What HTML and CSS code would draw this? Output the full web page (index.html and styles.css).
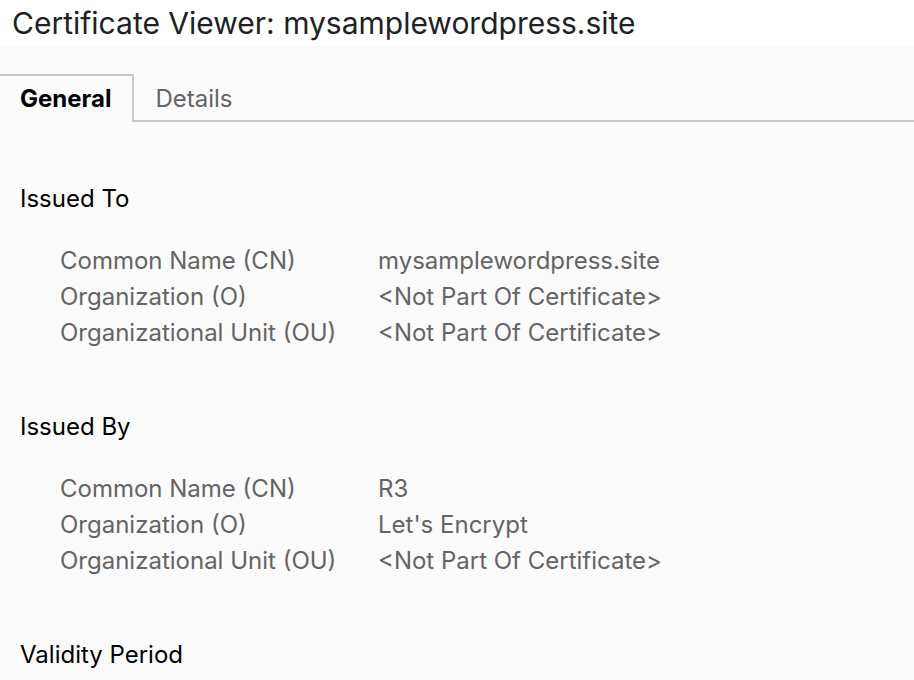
FILE: index.html
```html
<!DOCTYPE html>
<html lang="en">
<head>
<meta charset="utf-8">
<title>Certificate Viewer: mysamplewordpress.site</title>
<link rel="stylesheet" href="styles.css">
</head>
<body>
<header class="titlebar"><h1 class="title">Certificate Viewer: mysamplewordpress.site</h1></header>
<div class="tabs" role="tablist">
  <button class="tab tab-active" type="button" role="tab" id="general-tab" aria-selected="true" aria-controls="general">General</button>
  <button class="tab" type="button" role="tab" aria-selected="false">Details</button>
</div>
<main class="panel" id="general" role="tabpanel" aria-labelledby="general-tab">
  <section class="group">
    <h2 class="heading">Issued To</h2>
    <dl class="fields">
      <dt>Common Name (CN)</dt><dd>mysamplewordpress.site</dd>
      <dt>Organization (O)</dt><dd>&lt;Not Part Of Certificate&gt;</dd>
      <dt>Organizational Unit (OU)</dt><dd>&lt;Not Part Of Certificate&gt;</dd>
    </dl>
  </section>
  <section class="group">
    <h2 class="heading">Issued By</h2>
    <dl class="fields">
      <dt>Common Name (CN)</dt><dd>R3</dd>
      <dt>Organization (O)</dt><dd>Let's Encrypt</dd>
      <dt>Organizational Unit (OU)</dt><dd>&lt;Not Part Of Certificate&gt;</dd>
    </dl>
  </section>
  <section class="group">
    <h2 class="heading">Validity Period</h2>
  </section>
</main>
</body>
</html>
```
FILE: styles.css
```css
* {
  box-sizing: border-box;
}

body {
  margin: 0;
  background: #fbfbfb;
  color: #000;
  font-family: Inter, "Liberation Sans", sans-serif;
  font-size: 24px;
  line-height: 36px;
}

.titlebar {
  padding: 5px 12px;
  background: #fff;
}

.title {
  margin: 0;
  color: #202124;
  font-size: 30px;
  font-weight: 400;
  line-height: 36px;
}

.tabs {
  display: flex;
  padding-top: 28px;
}

.tabs::after {
  content: "";
  flex: 1;
  border-bottom: 2px solid #c8c8c8;
}

.tab {
  height: 48px;
  padding: 4px 20px 0 21px;
  border: 0;
  border-bottom: 2px solid #c8c8c8;
  background: none;
  color: #646464;
  font: inherit;
}

.tab-active {
  padding: 0 21px 0 20px;
  border-top: 2px solid #c8c8c8;
  border-right: 2px solid #c8c8c8;
  border-bottom: 0;
  color: #000;
  font-weight: 700;
}

.panel {
  padding: 59px 20px 0;
}

.group {
  margin-bottom: 58px;
}

.group:last-child {
  margin-bottom: 0;
}

.heading {
  margin: 0;
  font-size: 24px;
  font-weight: 400;
  line-height: 36px;
}

.fields {
  display: grid;
  grid-template-columns: 318px 1fr;
  margin: 26px 0 0 40px;
  color: #646464;
}

.fields dd {
  margin: 0;
}
```
